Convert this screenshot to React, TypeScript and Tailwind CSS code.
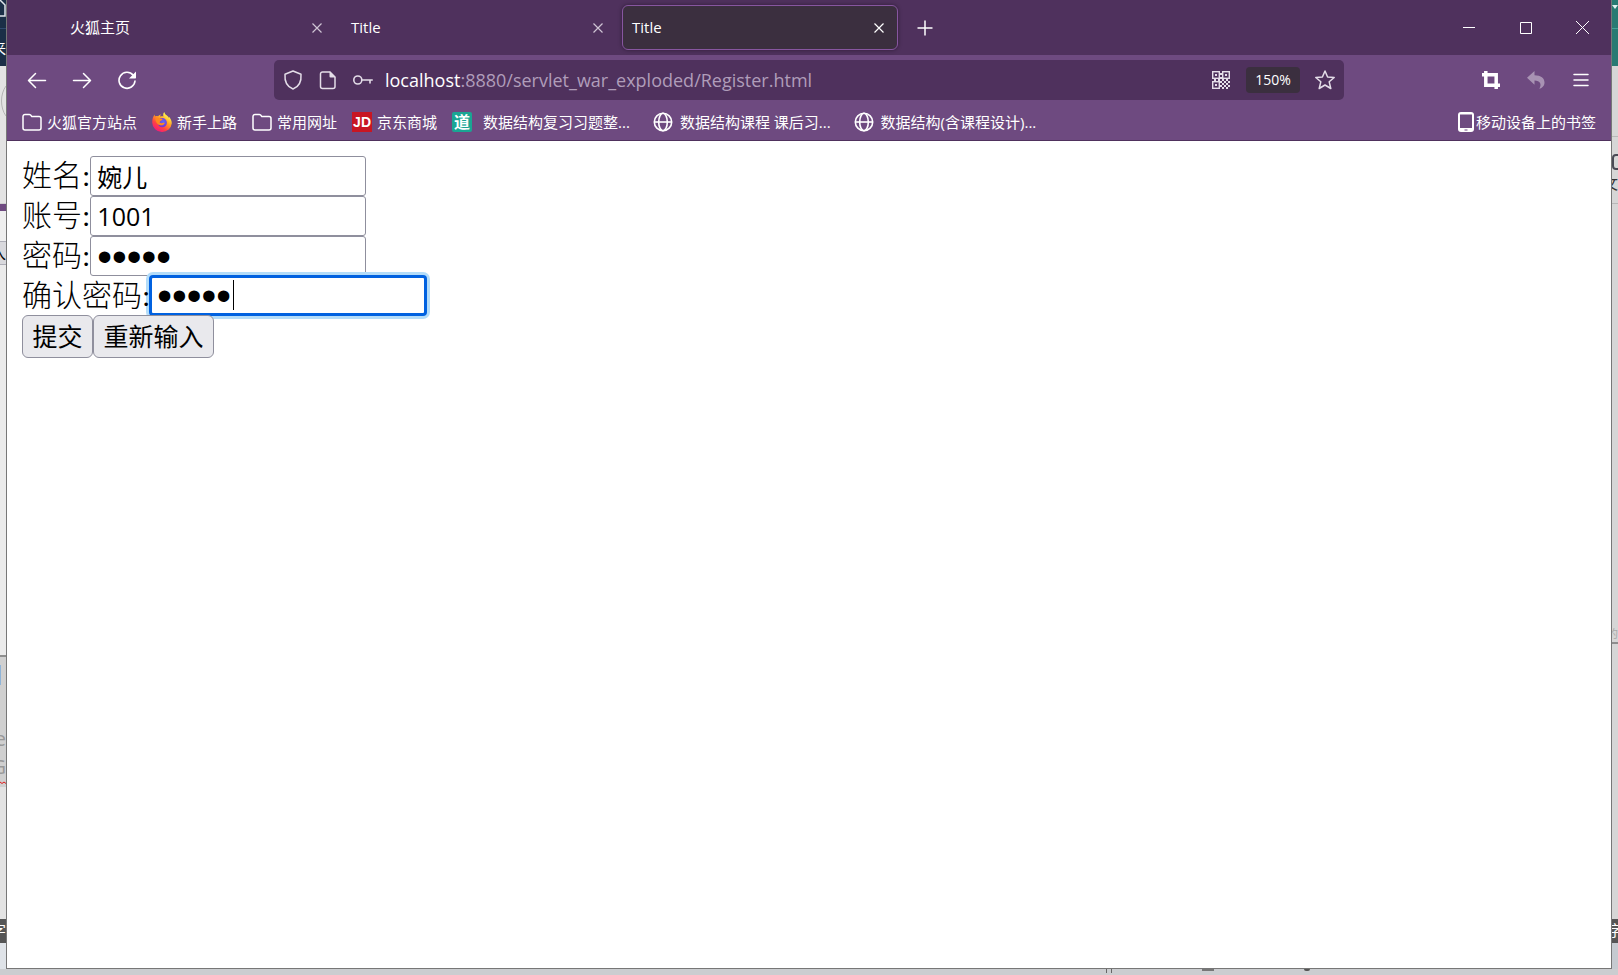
import React, { useState } from "react";

const UI_FONT = "font-['Open_Sans','Noto_Sans_CJK_SC',sans-serif]";

interface IconProps {
  className?: string;
}

const CloseIcon = ({ className = "" }: IconProps) => (
  <svg className={className} width="10" height="10" viewBox="0 0 10 10" stroke="currentColor" fill="none">
    <path d="M0.5 0.5l9 9M9.5 0.5l-9 9" strokeWidth="1.2" />
  </svg>
);

const BackIcon = () => (
  <svg width="20" height="20" viewBox="0 0 20 20" fill="none" stroke="currentColor" strokeWidth="1.5" strokeLinecap="round" strokeLinejoin="round">
    <path d="M18.5 10.5H1.8M8.5 3.5l-7 7 7 7" />
  </svg>
);

const ForwardIcon = () => (
  <svg width="20" height="20" viewBox="0 0 20 20" fill="none" stroke="currentColor" strokeWidth="1.5" strokeLinecap="round" strokeLinejoin="round">
    <path d="M1.5 10.5h16.7M11.5 3.5l7 7-7 7" />
  </svg>
);

const ReloadIcon = () => (
  <svg width="20" height="20" viewBox="0 0 20 20" fill="none">
    <path d="M16.2 5.2A8 8 0 1 0 18 11" stroke="currentColor" strokeWidth="1.6" strokeLinecap="round" />
    <path d="M19 1.5v6.300a.7.7 0 0 1-.7.7H12z" fill="currentColor" />
  </svg>
);

const ShieldIcon = () => (
  <svg width="20" height="20" viewBox="0 0 20 20" fill="none" stroke="currentColor" strokeWidth="1.5" strokeLinejoin="round">
    <path d="M10 1L18 4.200C18.5 10.500 16.500 16.500 10 19C3.500 16.500 1.500 10.500 2 4.200z" />
  </svg>
);

const PageIcon = () => (
  <svg width="20" height="20" viewBox="0 0 20 20" fill="none">
    <path d="M4.500 2h7.500l5 5v9.500a2 2 0 0 1-2 2H4.500a2 2 0 0 1-2-2V4a2 2 0 0 1 2-2z" stroke="currentColor" strokeWidth="1.5" />
    <path d="M11.500 1.500l6 6h-5a1 1 0 0 1-1-1z" fill="currentColor" />
  </svg>
);

const KeyIcon = () => (
  <svg width="20" height="20" viewBox="0 0 20 20" fill="none" stroke="currentColor" strokeWidth="1.6" strokeLinecap="round">
    <circle cx="4.8" cy="10" r="4" />
    <path d="M9 10h10.200M17 10v3" />
  </svg>
);

const QrIcon = () => (
  <svg width="18" height="18" viewBox="0 0 18 18" fill="none" stroke="currentColor">
    <g strokeWidth="1.4">
      <rect x="0.7" y="0.7" width="6.6" height="6.6" />
      <rect x="10.7" y="0.7" width="6.6" height="6.6" />
      <rect x="0.7" y="10.7" width="6.6" height="6.6" />
    </g>
    <g fill="currentColor" stroke="none">
      <path d="M3 3h2v2H3zM13 3h2v2h-2zM3 13h2v2H3z" />
      <path d="M8 2h2v2H8zM8 6h2v2H8zM2 8h2v2H2zM6 8h2v2H6zM10 8h2v2h-2zM14 8h2v2h-2z" />
      <path d="M8 10h2v2H8zM12 10h2v2h-2zM16 10h2v2h-2zM10 12h2v2h-2zM14 12h2v2h-2z" />
      <path d="M8 14h2v2H8zM12 14h2v2h-2zM16 14h2v2h-2zM10 16h2v2h-2zM14 16h2v2h-2z" />
    </g>
  </svg>
);

const StarIcon = () => (
  <svg width="20" height="20" viewBox="0 0 20 20" fill="none" stroke="currentColor" strokeWidth="1.5" strokeLinejoin="round">
    <path d="M10 1l2.600 6 6.600.5-5 4.300 1.600 6.700-5.800-3.500-5.800 3.500 1.600-6.700-5-4.300 6.600-.5z" />
  </svg>
);

const CropIcon = () => (
  <svg width="20" height="20" viewBox="0 0 20 20" fill="none" stroke="currentColor" strokeWidth="3.5">
    <path d="M4.800 1v14.200H19M1 4.800h14.200V19" />
  </svg>
);

const UndoIcon = () => (
  <svg width="20" height="20" viewBox="0 0 20 20" fill="currentColor">
    <path d="M1 7.800L8.500 1v4.200c6.500 0 10 3 10 7.300 0 3.200-2.200 5.600-5.200 6.200 2.700-4.200 1-8.200-4.800-8.200v4.300z" />
  </svg>
);

const MenuIcon = () => (
  <svg width="16" height="14" viewBox="0 0 16 14" fill="none" stroke="currentColor" strokeWidth="1.5" strokeLinecap="round">
    <path d="M1 1.500h14M1 7h14M1 12.500h14" />
  </svg>
);

const FolderIcon = () => (
  <svg width="20" height="20" viewBox="0 0 20 20" fill="none" stroke="currentColor" strokeWidth="1.5">
    <path d="M3 2.500h4.200a2 2 0 0 1 1.400.6l1.200 1.400H17a2 2 0 0 1 2 2V16a2 2 0 0 1-2 2H3a2 2 0 0 1-2-2V4.500a2 2 0 0 1 2-2z" />
  </svg>
);

const GlobeIcon = () => (
  <svg width="20" height="20" viewBox="0 0 20 20" fill="none" stroke="currentColor" strokeWidth="1.6">
    <circle cx="10" cy="10" r="8.7" />
    <ellipse cx="10" cy="10" rx="4.3" ry="8.7" />
    <path d="M1.500 10h17" />
  </svg>
);

const PhoneIcon = () => (
  <svg width="16" height="20" viewBox="0 0 16 20">
    <rect width="16" height="20" rx="3" fill="currentColor" />
    <rect x="2" y="2.5" width="12" height="13.5" fill="#6e4a80" />
    <path d="M6.500 17.500h3v1h-3z" fill="#6e4a80" />
  </svg>
);

const FirefoxIcon = () => (
  <svg width="20" height="20" viewBox="0 0 20 20">
    <defs>
      <linearGradient id="flame" x1="0.8" y1="0.05" x2="0.2" y2="0.95">
        <stop offset="0.1" stopColor="#fff44f" />
        <stop offset="0.4" stopColor="#ffa023" />
        <stop offset="0.7" stopColor="#ff4242" />
        <stop offset="1" stopColor="#f5157f" />
      </linearGradient>
      <radialGradient id="orb" cx="0.6" cy="0.4" r="0.6">
        <stop offset="0" stopColor="#5b6df8" />
        <stop offset="1" stopColor="#7a2fd0" />
      </radialGradient>
    </defs>
    <path
      d="M12.300 0c.2 1.600 1.300 2.400 2.300 3.300 1.200 1 1.700 1.700 2 2.600.2-.5.2-1 .1-1.500 2 2 3.100 4.300 3.100 6.800A9.800 9.800 0 0 1 10 20 9.700 9.700 0 0 1 .2 10.500C.2 7 1.200 4.500 2.700 2.600c0 .8.100 1.300.3 1.800.8-.4 2-.5 3-.1C6.700 3.300 7.800 2.700 9 2.400c-.6.8-1 1.400-1 2.200 1.400-.4 2.900-.3 3.500-.1-.7-1.500-.3-3.300.8-4.500z"
      fill="url(#flame)"
    />
    <circle cx="10.3" cy="10.7" r="4.6" fill="url(#orb)" />
    <path d="M3.400 6.500c1.500-1 3.500-.8 4.600.2 1.200 0 2.300.1 2.600.6-.2 1-1.400 1.200-2.200 1.700-.5.300-.4 1-.8 1.500.8.600 1.800 1 3 .6 1-.3 1.500-.6 2.200-.2-.8 1.700-2.500 2.700-4.400 2.400-2.600-.4-4.800-2.800-5-6.800z" fill="#ff8a1e" />
  </svg>
);

const JdIcon = () => (
  <span className="flex size-5 items-center justify-center bg-[#c81623] font-['Liberation_Sans',sans-serif] text-sm font-bold text-white">
    JD
  </span>
);

const DaoIcon = () => (
  <span className="mr-1.5 flex size-5 items-center justify-center rounded-xs bg-[#1aa593] text-base leading-none font-bold text-white">
    道
  </span>
);

const tabs = [
  { title: "火狐主页", active: false },
  { title: "Title", active: false },
  { title: "Title", active: true },
];

const bookmarks = [
  { label: "火狐官方站点", icon: <FolderIcon /> },
  { label: "新手上路", icon: <FirefoxIcon /> },
  { label: "常用网址", icon: <FolderIcon /> },
  { label: "京东商城", icon: <JdIcon /> },
  { label: "数据结构复习习题整...", icon: <DaoIcon /> },
  { label: "数据结构课程 课后习...", icon: <GlobeIcon />, wide: true },
  { label: "数据结构(含课程设计)...", icon: <GlobeIcon />, wide: true },
];

const TabBar = () => (
  <div className="flex h-[55px] items-center gap-[5px] bg-[#4f315d] pl-[53px] text-white">
    {tabs.map((tab, index) => (
      <div
        key={index}
        className={
          tab.active
            ? "flex h-[45px] w-[276px] items-center justify-between rounded-md border border-[#8756a0] bg-[#3b2f3f] pr-[13px] pl-[9px] shadow-[0_0_4px_rgba(0,0,0,0.4)]"
            : "flex h-[45px] w-[276px] items-center justify-between border border-transparent pr-[13px] pl-[9px]"
        }
      >
        <span className="text-[15px]">{tab.title}</span>
        <button aria-label="close tab" className={tab.active ? "text-white" : "text-[#cfc4d4]"}>
          <CloseIcon />
        </button>
      </div>
    ))}
    <button aria-label="new tab" className="ml-[14px]">
      <svg width="16" height="16" viewBox="0 0 16 16" stroke="currentColor" strokeWidth="1.5">
        <path d="M8 0.500v15M0.500 8h15" />
      </svg>
    </button>
    <div className="ml-auto flex h-full">
      <button aria-label="minimize" className="flex w-[57px] items-center justify-center">
        <svg width="12" height="12" viewBox="0 0 12 12" fill="currentColor">
          <path d="M0 5h12v1H0z" />
        </svg>
      </button>
      <button aria-label="maximize" className="flex w-[57px] items-center justify-center">
        <svg width="12" height="12" viewBox="0 0 12 12" fill="none" stroke="currentColor">
          <path d="M.5.5h11v11H.5z" />
        </svg>
      </button>
      <button aria-label="close" className="flex w-[57px] items-center justify-center">
        <svg width="13" height="13" viewBox="0 0 13 13" fill="none" stroke="currentColor">
          <path d="M0 0l13 13M13 0L0 13" />
        </svg>
      </button>
    </div>
  </div>
);

const ToolButton = ({ label, children, dim }: { label: string; children: React.ReactNode; dim?: boolean }) => (
  <button
    aria-label={label}
    className={dim ? "flex h-10 w-[45px] items-center justify-center opacity-40" : "flex h-10 w-[45px] items-center justify-center"}
  >
    {children}
  </button>
);

const NavBar = () => (
  <div className="flex items-center pt-[5px] pr-2 pl-[7px] text-white">
    <ToolButton label="back"><BackIcon /></ToolButton>
    <ToolButton label="forward"><ForwardIcon /></ToolButton>
    <ToolButton label="reload"><ReloadIcon /></ToolButton>
    <div className="mr-[124px] ml-[125px] flex h-10 flex-1 items-center rounded-[5px] bg-[#4f315d] pr-[9px] pl-[9px] text-[#e4dde8]">
      <div className="flex gap-[15px]">
        <ShieldIcon />
        <PageIcon />
        <KeyIcon />
      </div>
      <div className="ml-3 flex-1 text-lg text-[#b09dba]">
        <span className="text-white">localhost</span>:8880/servlet_war_exploded/Register.html
      </div>
      <QrIcon />
      <button className="mr-[15px] ml-4 h-[26px] w-[54px] rounded-sm bg-[#3b2f3f] text-sm text-white">150%</button>
      <button aria-label="bookmark"><StarIcon /></button>
    </div>
    <ToolButton label="screenshot"><CropIcon /></ToolButton>
    <ToolButton label="undo" dim><UndoIcon /></ToolButton>
    <ToolButton label="menu"><MenuIcon /></ToolButton>
  </div>
);

const BookmarkBar = () => (
  <div className="flex h-[41px] items-center gap-[15px] border-b border-[#4f315d] pt-1 pr-[15px] pl-[15px] text-[15px] text-white">
    {bookmarks.map((b) => (
      <a key={b.label} href="#" className={b.wide ? "flex items-center gap-[7px] pl-2" : "flex items-center gap-[5px]"}>
        {b.icon}
        <span className="whitespace-nowrap">{b.label}</span>
      </a>
    ))}
    <a href="#" className="ml-auto flex items-center gap-0.5">
      <PhoneIcon />
      <span>移动设备上的书签</span>
    </a>
  </div>
);

const fieldClass = "h-10 w-[276px] rounded-[3px] border border-[#8f8f9d] bg-white px-[6px] text-black outline-none";

const RegisterForm = () => {
  const [form, setForm] = useState({
    name: "婉儿",
    account: "1001",
    password: "12345",
    confirm: "12345",
  });

  const update = (key: string) => (e: React.ChangeEvent<HTMLInputElement>) =>
    setForm((prev) => ({ ...prev, [key]: e.target.value }));

  const labelClass =
    "relative z-10 font-['Liberation_Serif','Noto_Sans_CJK_SC',serif] text-[30px] leading-[40px] font-light";

  return (
    <form className="p-[15px] text-black" onSubmit={(e) => e.preventDefault()}>
      <div className="flex">
        <label htmlFor="name" className={labelClass}>姓名:</label>
        <input id="name" type="text" className={`${fieldClass} text-[25px]`} value={form.name} onChange={update("name")} />
      </div>
      <div className="flex">
        <label htmlFor="account" className={labelClass}>账号:</label>
        <input id="account" type="text" className={`${fieldClass} text-[25px]`} value={form.account} onChange={update("account")} />
      </div>
      <div className="flex">
        <label htmlFor="password" className={labelClass}>密码:</label>
        <input
          id="password"
          type="password"
          className={`${fieldClass} font-['Liberation_Sans',sans-serif] text-[42px]`}
          value={form.password}
          onChange={update("password")}
        />
      </div>
      <div className="flex h-[39px]">
        <label htmlFor="confirm" className={labelClass}>确认密码:</label>
        <div className="relative">
          <input
            id="confirm"
            type="password"
            className="h-[39px] w-[276px] rounded-[3px] border-2 border-[#0061e0] bg-white px-[5px] font-['Liberation_Sans',sans-serif] text-[42px] text-black caret-transparent shadow-[0_0_0_1px_#0061e0,0_0_0_4px_#b3dcf9] outline-none"
            value={form.confirm}
            onChange={update("confirm")}
          />
          {/* text caret */}
          <span className="absolute top-[4px] left-[83px] h-[30px] w-px bg-black" />
        </div>
      </div>
      <div className="relative flex">
        <button type="submit" className="h-[43px] w-[71px] rounded-md border border-[#8f8f9d] bg-[#e9e9ed] text-[25px]">提交</button>
        <button type="reset" className="h-[43px] w-[121px] rounded-md border border-[#8f8f9d] bg-[#e9e9ed] text-[25px]">重新输入</button>
      </div>
    </form>
  );
};

// slivers of the windows behind the browser
const LeftEdge = () => (
  <div className="flex w-1.5 flex-col overflow-hidden bg-[#e3e3e3]">
    <div className="flex h-[66px] flex-col bg-[#1b2f47] text-white">
      <svg width="6" height="28" viewBox="0 0 6 28" fill="none" stroke="#dfe4ea" strokeWidth="1.5">
        <path d="M0 0l5 5v11H0" />
      </svg>
      <div className="h-[38px] border-t border-[#2f4a6e] pt-2">
        <span className="flex w-1.5 justify-end text-[15px]">来</span>
      </div>
    </div>
    <div className="h-[138px] border-b border-[#cfcfcf]">
      <svg className="mt-4" width="6" height="38" viewBox="0 0 6 38" fill="none" stroke="#b5b5b5">
        <path d="M6 4C0 12 0 26 6 34" />
      </svg>
    </div>
    <div className="h-[7px] bg-[#6e4a80]" />
    <div className="h-[30px] bg-[#efefef]" />
    <div className="flex h-6 justify-end border-y border-[#aeaeb8] bg-[#d9d9dd] text-[15px]">入</div>
    <div className="h-[392px] border-b-2 border-[#8e8e8e] bg-[#ebebeb]" />
    <div className="flex h-[130px] flex-col bg-[#d0d0d0] text-xl text-[#999]">
      <div className="mt-2 h-5 w-px bg-[#8fb4d8]" />
      <span className="mt-10 flex justify-end">e</span>
      <span className="flex justify-end">G</span>
      <svg width="6" height="3" viewBox="0 0 6 3" fill="none" stroke="#e01b1b">
        <path d="M0 1l2 1.500L4 1l2 1.500" />
      </svg>
    </div>
    <div className="h-[132px]" />
    <div className="flex h-6 justify-end bg-[#555] text-[15px] text-white">字</div>
    <div className="flex-1 bg-[#dfe3e8]" />
  </div>
);

const RightEdge = () => (
  <div className="flex w-1.5 flex-col overflow-hidden bg-[#d6d6d6]">
    <div className="h-[66px] bg-[#287a73]">
      <svg width="6" height="29" viewBox="0 0 6 29">
        <path d="M0 5h6l-3 4z" fill="#dff3f0" />
        <path d="M0 28h6v1H0z" fill="#43a399" />
      </svg>
    </div>
    <div className="h-[71px] border-b border-[#b8b8b8]" />
    <div className="h-[67px] border-b border-[#b8b8b8] text-[15px] text-[#333]">
      <svg className="mt-[17px]" width="6" height="16" viewBox="0 0 6 16" fill="none" stroke="#4a4a55" strokeWidth="2">
        <path d="M6 1H4Q1 1 1 4v8q0 3 3 3h2" />
      </svg>
      <span className="mt-0.5 flex w-1.5 justify-end">文</span>
    </div>
    <div className="flex h-[440px] flex-col justify-end border-b-2 border-[#8e8e8e] text-[11px] text-[#aaa]">
      <span className="flex justify-end">的</span>
    </div>
    <div className="h-[275px]" />
    <div className="flex h-6 justify-center bg-[#555] text-[15px] text-white">字</div>
    <div className="flex-1 bg-[#c5cad0]" />
  </div>
);

const App: React.FC = () => {
  return (
    <div className={`flex h-screen flex-col overflow-hidden bg-[#cbcdd0] ${UI_FONT}`}>
      <div className="flex min-h-0 flex-1">
        <LeftEdge />
        <main className="flex flex-1 flex-col border-x border-b border-[#777] bg-white">
          <TabBar />
          <header className="bg-[#6e4a80]">
            <NavBar />
            <BookmarkBar />
          </header>
          <RegisterForm />
        </main>
        <RightEdge />
      </div>
      <div className="flex h-1.5 items-start justify-end gap-[90px] pr-[308px]">
        <div className="h-1 w-1.5 border-x border-[#666]" />
        <div className="h-0.5 w-3 bg-[#777]" />
        <div className="h-0.5 w-1.5 rounded-b-full bg-[#555]" />
      </div>
    </div>
  );
};

export default App;
